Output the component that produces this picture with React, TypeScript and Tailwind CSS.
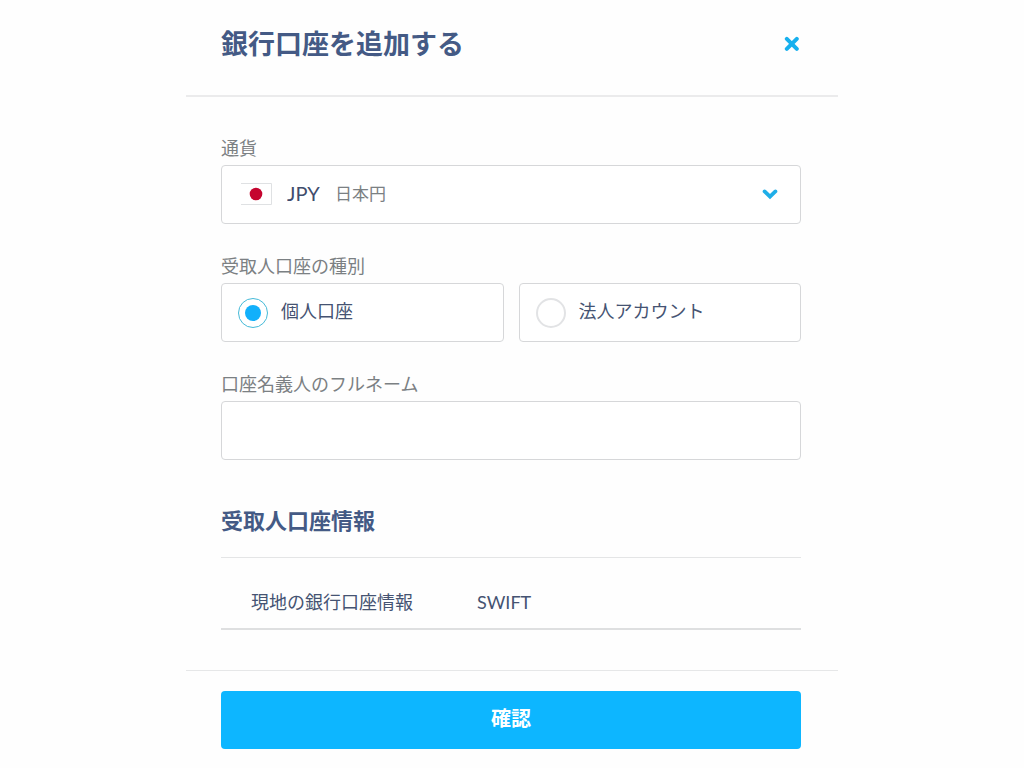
import { useState } from "react";

const currencies = [
  { code: "JPY", name: "日本円" },
];

const accountTypes = [
  { value: "personal", label: "個人口座" },
  { value: "business", label: "法人アカウント" },
];

const detailTabs = [
  { value: "local", label: "現地の銀行口座情報" },
  { value: "swift", label: "SWIFT" },
];

function CloseIcon() {
  return (
    <svg viewBox="0 0 16 16" className="size-4" aria-hidden="true">
      <path d="M2.8 2.8l10 10M12.8 2.8l-10 10" stroke="#17b0ee" strokeWidth="4" strokeLinecap="round" fill="none" />
    </svg>
  );
}

function ChevronIcon() {
  return (
    <svg viewBox="0 0 16 12" className="h-3 w-4" aria-hidden="true">
      <path d="M2.6 3.4L8 8.6l5.4-5.2" stroke="#1faee8" strokeWidth="3.8" strokeLinecap="round" fill="none" />
    </svg>
  );
}

function JapanFlag() {
  return (
    <svg viewBox="0 0 32 22" className="h-[22px] w-8" aria-hidden="true">
      <path d="M1 .5H31.5V21.5H1" fill="#fff" stroke="#dfe1e3" />
      <circle cx="16" cy="11" r="6.3" fill="#c5052f" />
    </svg>
  );
}

export default function App() {
  const [currency, setCurrency] = useState("JPY");
  const [accountType, setAccountType] = useState("personal");
  const [tab, setTab] = useState("local");
  const selected = currencies.find((c) => c.code === currency) ?? currencies[0];

  return (
    <main className="min-h-screen bg-[#fefefe] font-['Lato','Noto_Sans_CJK_JP',sans-serif] text-[18px] leading-6 text-[#455372]">
      <form className="mx-auto max-w-[652px]" onSubmit={(e) => e.preventDefault()}>
        <header className="flex items-center justify-between border-b-2 border-[#ebebec] pt-6 pr-[38px] pb-[31px] pl-[35px]">
          <h1 className="text-[27px] leading-10 font-bold text-[#445a85]">銀行口座を追加する</h1>
          <button type="button" aria-label="閉じる" className="cursor-pointer">
            <CloseIcon />
          </button>
        </header>

        <div className="pt-[39px] pr-[37px] pb-10 pl-[35px]">
          <div className="mb-[30px]">
            <label htmlFor="currency" className="mb-[5px] block text-[#7b8083]">通貨</label>
            <div className="grid">
              <select
                id="currency"
                value={currency}
                onChange={(e) => setCurrency(e.target.value)}
                className="col-start-1 row-start-1 h-[59px] w-full appearance-none rounded border border-[#d6d7d9] bg-white pb-1 pl-[65px] text-[20px] text-[#3f4d6d]"
              >
                {currencies.map((c) => (
                  <option key={c.code} value={c.code}>{c.code}</option>
                ))}
              </select>
              <div className="pointer-events-none col-start-1 row-start-1 flex items-center pr-[23px] pb-0.5 pl-[19px]">
                <JapanFlag />
                <span className="ml-[63px] text-[17px] text-[#7b8083]">{selected.name}</span>
                <span className="ml-auto">
                  <ChevronIcon />
                </span>
              </div>
            </div>
          </div>

          <fieldset className="mb-[30px]">
            <legend className="mb-[5px] text-[#7b8083]">受取人口座の種別</legend>
            <div className="grid grid-cols-2 gap-[15px]">
              {accountTypes.map((t) => (
                <label
                  key={t.value}
                  className="flex h-[59px] cursor-pointer items-center gap-[13px] rounded border border-[#d6d7d9] bg-white px-4"
                >
                  <input
                    type="radio"
                    name="account-type"
                    value={t.value}
                    checked={accountType === t.value}
                    onChange={() => setAccountType(t.value)}
                    className="grid size-[30px] shrink-0 appearance-none place-items-center rounded-full border-2 border-[#e2e3e5] bg-white before:size-4 before:rounded-full checked:border checked:border-[#45bad8] checked:before:bg-[#12b0fb]"
                  />
                  <span className="pb-1">{t.label}</span>
                </label>
              ))}
            </div>
          </fieldset>

          <div className="mb-[45px]">
            <label htmlFor="full-name" className="mb-[5px] block text-[#7b8083]">口座名義人のフルネーム</label>
            <input
              id="full-name"
              type="text"
              className="block h-[59px] w-full rounded border border-[#d6d7d9] bg-white px-5"
            />
          </div>

          <section>
            <h2 className="mb-5 text-[22px] leading-8 font-bold text-[#445a85]">受取人口座情報</h2>
            <div
              role="tablist"
              aria-label="受取人口座情報"
              className="flex gap-16 border-t border-b-2 border-t-[#e4e5e6] border-b-[#dedfe0] px-[30px] pt-8 pb-[14px]"
            >
              {detailTabs.map((t) => (
                <button
                  key={t.value}
                  type="button"
                  role="tab"
                  aria-selected={tab === t.value}
                  onClick={() => setTab(t.value)}
                  className="cursor-pointer"
                >
                  {t.label}
                </button>
              ))}
            </div>
          </section>
        </div>

        <footer className="border-t border-[#e6e7e8] pt-5 pr-[37px] pb-[19px] pl-[35px]">
          <button
            type="submit"
            className="h-[58px] w-full cursor-pointer rounded bg-[#0db6ff] pb-1 text-[20px] font-bold text-white"
          >
            確認
          </button>
        </footer>
      </form>
    </main>
  );
}
